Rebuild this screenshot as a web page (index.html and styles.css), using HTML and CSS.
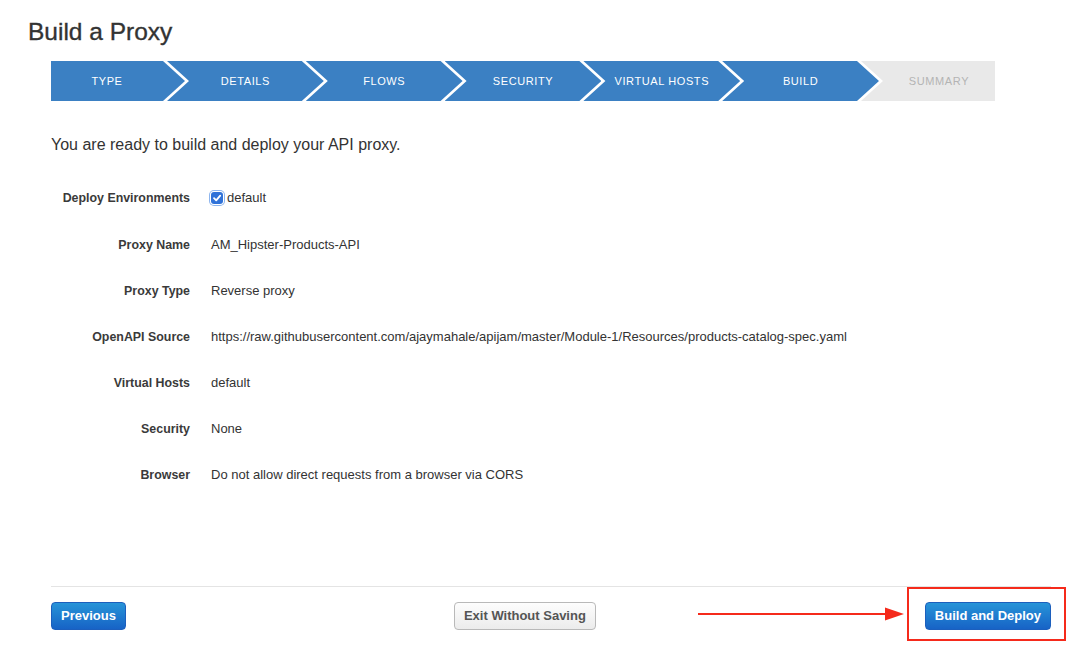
FILE: index.html
```html
<!DOCTYPE html>
<html lang="en">
<head>
<meta charset="utf-8">
<title>Build a Proxy</title>
<link rel="stylesheet" href="styles.css">
</head>
<body>
<div class="page">
  <h1 class="title">Build a Proxy</h1>
  <div class="content">
    <ol class="stepper">
      <li class="step first">TYPE</li>
      <li class="step">DETAILS</li>
      <li class="step">FLOWS</li>
      <li class="step">SECURITY</li>
      <li class="step">VIRTUAL HOSTS</li>
      <li class="step">BUILD</li>
      <li class="step last">SUMMARY</li>
    </ol>

    <p class="intro">You are ready to build and deploy your API proxy.</p>

    <div class="summary">
      <div class="label">Deploy Environments</div>
      <div class="value"><span class="checkbox"><svg viewBox="0 0 12 12" width="12" height="12"><path d="M3 6.2 L5.2 8.4 L9.2 3.6" fill="none" stroke="#fff" stroke-width="1.8" stroke-linecap="round" stroke-linejoin="round"/></svg></span>default</div>

      <div class="label">Proxy Name</div>
      <div class="value">AM_Hipster-Products-API</div>

      <div class="label">Proxy Type</div>
      <div class="value">Reverse proxy</div>

      <div class="label">OpenAPI Source</div>
      <div class="value">https://raw.githubusercontent.com/ajaymahale/apijam/master/Module-1/Resources/products-catalog-spec.yaml</div>

      <div class="label">Virtual Hosts</div>
      <div class="value">default</div>

      <div class="label">Security</div>
      <div class="value">None</div>

      <div class="label">Browser</div>
      <div class="value">Do not allow direct requests from a browser via CORS</div>
    </div>

    <div class="footer">
      <button class="btn btn-primary">Previous</button>
      <button class="btn btn-default exit">Exit Without Saving</button>
      <div class="build-wrap">
        <svg class="anno-arrow" viewBox="0 0 206 14" width="206" height="14"><line x1="0" y1="7" x2="190" y2="7" stroke="#f52a1b" stroke-width="2"/><polygon points="187,0.5 206,7 187,13.5" fill="#f52a1b"/></svg>
        <span class="anno-box"></span>
        <button class="btn btn-primary">Build and Deploy</button>
      </div>
    </div>
  </div>
</div>
</body>
</html>
```

FILE: styles.css
```css
html, body {
  margin: 0;
  padding: 0;
  background: #fff;
}

body {
  font-family: "Liberation Sans", Arial, Helvetica, sans-serif;
  color: #333;
}

.page {
  padding: 17px 0 21px 28px;
}

.title {
  margin: 0;
  font-size: 24.5px;
  line-height: 30px;
  font-weight: normal;
  color: #333;
  -webkit-text-stroke: 0.35px #333;
}

.content {
  margin-left: 23px;
  width: 1000px;
}

.stepper {
  list-style: none;
  margin: 14px 0 0 0;
  padding: 0;
  display: flex;
  height: 40px;
}

.step {
  flex: none;
  width: 156.8px;
  height: 40px;
  margin-left: -18px;
  padding: 0 22px;
  box-sizing: border-box;
  display: flex;
  align-items: center;
  justify-content: center;
  background: #3b80c3;
  color: #fff;
  font-size: 11px;
  letter-spacing: 0.6px;
  white-space: nowrap;
  clip-path: polygon(0 0, calc(100% - 22px) 0, 100% 50%, calc(100% - 22px) 100%, 0 100%, 22px 50%);
}

.step.first {
  width: 134px;
  margin-left: 0;
  padding-left: 0;
  clip-path: polygon(0 0, calc(100% - 22px) 0, 100% 50%, calc(100% - 22px) 100%, 0 100%);
}

.step.last {
  width: 134px;
  padding-right: 0;
  background: #e9e9e9;
  color: #b4b4b4;
  clip-path: polygon(0 0, 100% 0, 100% 100%, 0 100%, 22px 50%);
}

.intro {
  margin: 34px 0 0 0;
  font-size: 16px;
  line-height: 20px;
  color: #333;
}

.summary {
  margin: 33px 0 101px 0;
  display: grid;
  grid-template-columns: 139px 1fr;
  grid-template-rows: 21px;
  grid-auto-rows: 20px;
  column-gap: 21px;
  row-gap: 26px;
  font-size: 13px;
  line-height: 20px;
}

.label {
  text-align: right;
  font-weight: bold;
  font-size: 12.4px;
  color: #3a3a3a;
  white-space: nowrap;
}

.value {
  color: #333;
  white-space: nowrap;
  display: flex;
  align-items: center;
  height: 20px;
}

.checkbox {
  display: inline-flex;
  width: 12px;
  height: 12px;
  border-radius: 3px;
  background: #2f72d8;
  margin-right: 4px;
  box-shadow: 0 0 0 1px #fff, 0 0 0 2px #8db5ee;
}

.footer {
  border-top: 1px solid #e4e4e4;
  padding-top: 15px;
  display: flex;
  align-items: center;
}

.btn {
  height: 28px;
  padding: 0 9px;
  border-radius: 4px;
  font-family: "Liberation Sans", Arial, Helvetica, sans-serif;
  font-size: 13px;
  font-weight: bold;
  line-height: 26px;
  cursor: pointer;
  box-sizing: border-box;
}

.btn-primary {
  color: #fff;
  border: 1px solid #1c5fbd;
  background: linear-gradient(#2794d8, #1763c6);
}

.btn-default {
  color: #555;
  border: 1px solid #b9b9b9;
  background: linear-gradient(#fdfdfd, #ececec);
}

.exit {
  margin-left: 328px;
}

.build-wrap {
  margin-left: auto;
  position: relative;
  display: flex;
  height: 28px;
}

.anno-box {
  position: absolute;
  left: -18px;
  right: -15px;
  top: -15px;
  bottom: -11px;
  border: 2px solid #f52a1b;
  pointer-events: none;
}

.anno-arrow {
  position: absolute;
  left: -227px;
  top: 5px;
}
```
